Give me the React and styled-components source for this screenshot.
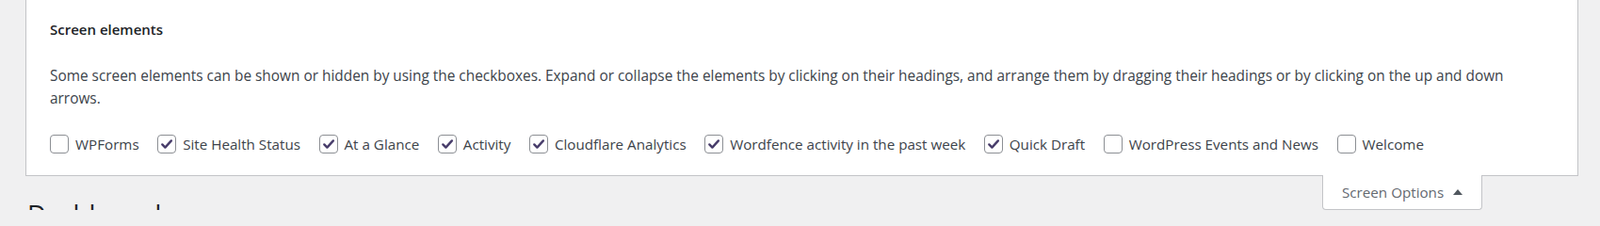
import React from "react";
import styled, { createGlobalStyle } from "styled-components";

const GlobalStyle = createGlobalStyle`
  html, body { margin: 0; padding: 0; }
  body {
    background: #f0f0f1;
    font-family: "Open Sans", "Noto Sans", sans-serif;
    color: #3c434a;
    overflow: hidden;
  }
`;

const Page = styled.div`
  width: 1699px;
  height: 223px;
  overflow: hidden;
`;

const ScreenMeta = styled.div`
  margin: 0 23px 0 27px;
  background: #fff;
  border: 1px solid #c3c4c7;
  border-top: none;
  padding: 20px 25px 21px 25px;
`;

const Legend = styled.h5`
  margin: 0;
  font-size: 15px;
  font-weight: 600;
  line-height: 23px;
  color: #1d2327;
`;

const Intro = styled.p`
  margin: 26px 0 0;
  font-size: 15.4px;
  line-height: 24px;
  color: #3c434a;
`;

const Prefs = styled.div`
  margin-top: 24px;
  display: flex;
  flex-wrap: wrap;
  align-items: center;
  column-gap: 19.5px;
`;

const Pref = styled.label`
  display: flex;
  align-items: center;
  gap: 7px;
  font-size: 15.2px;
  line-height: 24px;
  color: #3c434a;
  white-space: nowrap;
`;

const Box = styled.span`
  width: 20px;
  height: 20px;
  box-sizing: border-box;
  border: 1px solid #8c8f94;
  border-radius: 4px;
  background: #fff;
  display: flex;
  align-items: center;
  justify-content: center;
  flex-shrink: 0;
`;

const Header = styled.div`
  display: flex;
  justify-content: space-between;
  align-items: flex-start;
  margin-right: 125px;
`;

const Title = styled.h1`
  margin: 23px 0 0 29px;
  font-size: 27.6px;
  font-weight: 400;
  line-height: 1.3;
  color: #1d2327;
  white-space: nowrap;
`;

const Tab = styled.button`
  margin: -1px 0 0;
  height: 37px;
  box-sizing: border-box;
  width: 170px;
  flex-shrink: 0;
  padding: 0 0 0 20px;
  background: #fff;
  border: 1px solid #c3c4c7;
  border-top: none;
  border-radius: 0 0 4px 4px;
  display: flex;
  align-items: center;
  gap: 10px;
  font-family: "Open Sans", "Noto Sans", sans-serif;
  font-size: 15.2px;
  line-height: 36px;
  color: #646970;
  white-space: nowrap;
  cursor: pointer;
`;

const Arrow = styled.span`
  width: 0;
  height: 0;
  flex-shrink: 0;
  border-left: 5px solid transparent;
  border-right: 5px solid transparent;
  border-bottom: 6px solid #50575e;
  margin-top: -1px;
`;

const items = [
  ["WPForms", false],
  ["Site Health Status", true],
  ["At a Glance", true],
  ["Activity", true],
  ["Cloudflare Analytics", true],
  ["Wordfence activity in the past week", true],
  ["Quick Draft", true],
  ["WordPress Events and News", false],
  ["Welcome", false],
];

function Check() {
  return (
    <svg width="16" height="16" viewBox="0 0 16 16" aria-hidden="true">
      <path
        d="M3.3 8.4 L6.4 11.6 L12.9 4.4"
        fill="none"
        stroke="#483d6b"
        strokeWidth="2.4"
        strokeLinecap="round"
        strokeLinejoin="round"
      />
    </svg>
  );
}

export default function App() {
  return (
    <Page>
      <GlobalStyle />
      <ScreenMeta>
        <Legend>Screen elements</Legend>
        <Intro>
          Some screen elements can be shown or hidden by using the checkboxes. Expand or
          collapse the elements by clicking on their headings, and arrange them by dragging
          their headings or by clicking on the up and down arrows.
        </Intro>
        <Prefs>
          {items.map(([label, checked]) => (
            <Pref key={label}>
              <Box>{checked && <Check />}</Box>
              {label}
            </Pref>
          ))}
        </Prefs>
      </ScreenMeta>
      <Header>
        <Title>Dashboard</Title>
        <Tab>
          Screen Options
          <Arrow />
        </Tab>
      </Header>
    </Page>
  );
}
